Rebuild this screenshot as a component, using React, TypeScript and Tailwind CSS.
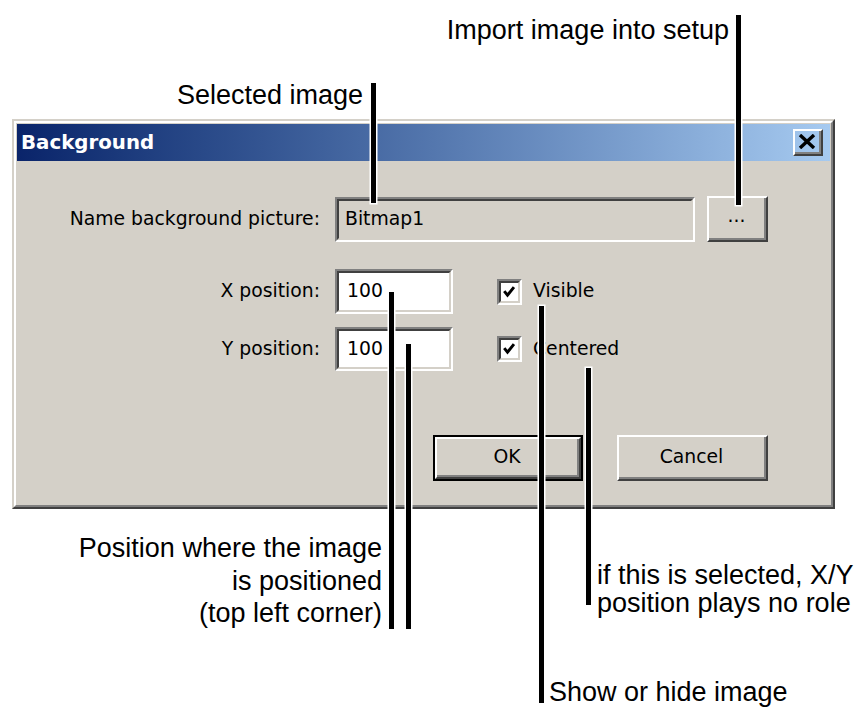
const uiFont = { fontFamily: '"DejaVu Sans", Verdana, sans-serif' };

function Raised({ className = "", children, isDefault = false }: { className?: string; children?: React.ReactNode; isDefault?: boolean }) {
  const bevel = (
    <div className="h-full border-2 border-t-white border-l-white border-r-[#404040] border-b-[#404040]">
      <div className="h-full flex items-center justify-center border-r-2 border-b-2 border-[#808080]">{children}</div>
    </div>
  );
  if (isDefault) {
    return <div className={`border-2 border-black ${className}`}>{bevel}</div>;
  }
  return <div className={className}>{bevel}</div>;
}

function Sunken({ className = "", bg = "bg-white", children }: { className?: string; bg?: string; children?: React.ReactNode }) {
  return (
    <div className={`border-2 border-t-[#808080] border-l-[#808080] border-r-white border-b-white ${className}`}>
      <div className={`h-full flex items-center border-2 border-t-[#404040] border-l-[#404040] border-r-[#d4d0c8] border-b-[#d4d0c8] ${bg}`}>
        {children}
      </div>
    </div>
  );
}

function Checkbox({ label }: { label: string }) {
  return (
    <div className="flex items-center ml-[44px]">
      <Sunken className="w-[25px] h-[26px]">
        <svg width="21" height="22" viewBox="0 0 21 22" className="block">
          <polyline points="4,10 8,15 16,5" fill="none" stroke="black" strokeWidth="3.6" />
        </svg>
      </Sunken>
      <span className="ml-[11px] text-[18.8px] text-black">{label}</span>
    </div>
  );
}

function Dialog() {
  return (
    <div
      className="w-[823px] h-[390px] border-2 border-t-[#d4d0c8] border-l-[#d4d0c8] border-r-[#404040] border-b-[#404040]"
      style={uiFont}
    >
      <div className="h-full flex flex-col p-px bg-[#d4d0c8] border-2 border-t-white border-l-white border-r-[#808080] border-b-[#808080]">
        {/* title bar */}
        <div className="h-[37px] flex items-center justify-between pl-[4px] pr-[7px] bg-gradient-to-r from-[#0a246a] to-[#a6caf0]">
          <span className="text-white font-bold text-[19.8px]">Background</span>
          <Raised className="w-[30px] h-[27px]">
            <svg width="18" height="15" viewBox="0 0 18 15">
              <path d="M2 1 L16 14 M16 1 L2 14" stroke="black" strokeWidth="3.4" />
            </svg>
          </Raised>
        </div>

        {/* body */}
        <div className="flex flex-col text-[18.8px] text-black">
          <div className="flex items-center mt-[35px]">
            <span className="w-[303px] text-right">Name background picture:</span>
            <Sunken className="ml-[15px] w-[360px] h-[45px]" bg="bg-[#d4d0c8]">
              <span className="pl-[6px]">Bitmap1</span>
            </Sunken>
            <Raised className="ml-[12px] w-[61px] h-[46px]">
              <span className="-mt-[4px]">...</span>
            </Raised>
          </div>

          <div className="flex items-center mt-[27px]">
            <span className="w-[303px] text-right">X position:</span>
            <Sunken className="ml-[15px] w-[118px] h-[45px]">
              <span className="pl-[8px]">100</span>
            </Sunken>
            <Checkbox label="Visible" />
          </div>

          <div className="flex items-center mt-[13px]">
            <span className="w-[303px] text-right">Y position:</span>
            <Sunken className="ml-[15px] w-[118px] h-[44px]">
              <span className="pl-[8px]">100</span>
            </Sunken>
            <Checkbox label="Centered" />
          </div>

          <div className="flex items-center mt-[64px]">
            <Raised isDefault className="ml-[416px] w-[150px] h-[46px]">
              <span>OK</span>
            </Raised>
            <Raised className="ml-[34px] w-[151px] h-[46px]">
              <span>Cancel</span>
            </Raised>
          </div>
        </div>
      </div>
    </div>
  );
}

function Line({ x, y, h }: { x: number; y: number; h: number }) {
  return (
    <div
      className="absolute w-[5px] bg-black shadow-[0_0_0_1.5px_white]"
      style={{ left: x, top: y, height: h }}
    />
  );
}

function Callouts() {
  const note = "absolute text-[27px] text-black whitespace-nowrap";
  const f = { fontFamily: '"Liberation Sans", Arial, Helvetica, sans-serif' };
  return (
    <>
      <Line x={371} y={83} h={120} />
      <Line x={736} y={15} h={190} />
      <Line x={389} y={292} h={337} />
      <Line x={406} y={344} h={285} />
      <Line x={539} y={306} h={397} />
      <Line x={586} y={368} h={237} />

      <div className={`${note} leading-[30px] right-[494px] top-[80px]`} style={f}>
        Selected image
      </div>
      <div className={`${note} leading-[30px] right-[128px] top-[15px]`} style={f}>
        Import image into setup
      </div>
      <div className={`${note} leading-[32.5px] right-[475px] top-[532px] text-right`} style={f}>
        Position where the image
        <br />
        is positioned
        <br />
        (top left corner)
      </div>
      <div className={`${note} leading-[28px] left-[597px] top-[561px]`} style={f}>
        if this is selected, X/Y
        <br />
        position plays no role
      </div>
      <div className={`${note} leading-[30px] left-[549px] top-[677px]`} style={f}>
        Show or hide image
      </div>
    </>
  );
}

export default function App() {
  return (
    <div className="relative w-[857px] h-[707px] bg-white overflow-hidden">
      <div className="pt-[119px] pl-[12px]">
        <Dialog />
      </div>
      <Callouts />
    </div>
  );
}
